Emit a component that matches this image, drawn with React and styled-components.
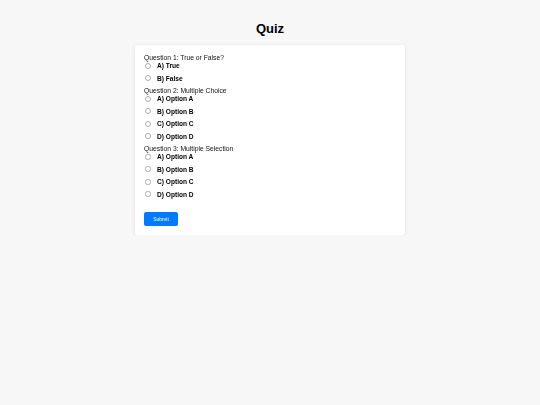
import React from "react";
import styled, { createGlobalStyle } from "styled-components";

const GlobalStyle = createGlobalStyle`
  body {
    margin: 0;
    background: #f7f7f7;
    font-family: "Liberation Sans", Arial, sans-serif;
    color: #000;
    -webkit-font-smoothing: antialiased;
  }
`;

const Page = styled.div`
  display: flex;
  flex-direction: column;
  align-items: center;
  padding-top: 21px;
`;

const Title = styled.h1`
  margin: 0 0 8px;
  font-size: 13px;
  line-height: 16px;
  font-weight: 700;
`;

const Card = styled.form`
  width: 270px;
  box-sizing: border-box;
  background: #fff;
  border-radius: 3px;
  box-shadow: 0 1px 4px rgba(0, 0, 0, 0.1);
  padding: 8.5px 9px 9px;
  will-change: transform;
`;

const QuestionLabel = styled.div`
  font-size: 6.75px;
  line-height: 8px;
  color: #111;
`;

const Option = styled.label`
  display: flex;
  align-items: center;
  height: 8px;
  margin-bottom: 4.5px;
  font-size: 6.6px;
  font-weight: 700;
  color: #000;
`;

const Input = styled.input`
  width: 6px;
  height: 6px;
  margin: 0 6px 0 1px;
  opacity: 0.6;
`;

const SubmitButton = styled.button`
  margin-top: 9.5px;
  width: 34px;
  height: 14px;
  padding: 0;
  border: none;
  border-radius: 2px;
  background: #007bff;
  color: #fff;
  font-family: "Liberation Sans", Arial, sans-serif;
  font-size: 5px;
`;

const questions = [
  { text: "Question 1: True or False?", type: "radio", options: ["A) True", "B) False"] },
  {
    text: "Question 2: Multiple Choice",
    type: "radio",
    options: ["A) Option A", "B) Option B", "C) Option C", "D) Option D"],
  },
  {
    text: "Question 3: Multiple Selection",
    type: "checkbox",
    options: ["A) Option A", "B) Option B", "C) Option C", "D) Option D"],
  },
];

export default function App() {
  return (
    <>
      <GlobalStyle />
      <Page>
        <Title>Quiz</Title>
        <Card onSubmit={(e) => e.preventDefault()}>
          {questions.map((q, i) => (
            <div key={i}>
              <QuestionLabel>{q.text}</QuestionLabel>
              {q.options.map((o) => (
                <Option key={o}>
                  <Input type={q.type} name={`q${i}`} />
                  {o}
                </Option>
              ))}
            </div>
          ))}
          <SubmitButton type="submit">Submit</SubmitButton>
        </Card>
      </Page>
    </>
  );
}
